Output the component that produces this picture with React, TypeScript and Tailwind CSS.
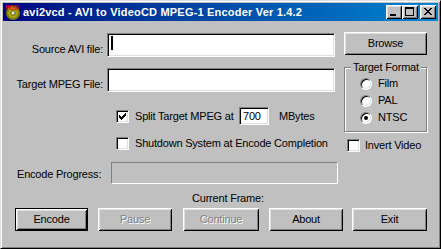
import type { ReactNode } from "react";

// Win98-ish raised button bevel
const raised =
  "shadow-[inset_1px_1px_0_#fff,inset_-1px_-1px_0_#000,inset_2px_2px_0_#dfdfdf,inset_-2px_-2px_0_#808080]";

const sunken =
  "border border-t-[#808080] border-l-[#808080] border-b-white border-r-white shadow-[inset_1px_1px_0_#000,inset_-1px_-1px_0_#dfdfdf]";

function Button({
  children,
  width,
  disabled,
  isDefault,
}: {
  children: ReactNode;
  width: string;
  disabled?: boolean;
  isDefault?: boolean;
}) {
  return (
    <div
      className={`${width} h-[23px] shrink-0 bg-[#c0c0c0] ${
        isDefault ? "border border-black" : ""
      }`}
    >
      <div
        className={`w-full h-full flex items-center justify-center ${raised} ${
          disabled ? "text-[#808080] [text-shadow:1px_1px_0_#fff]" : ""
        }`}
      >
        {children}
      </div>
    </div>
  );
}

function Checkbox({ checked }: { checked?: boolean }) {
  return (
    <div className={`w-[13px] h-[13px] shrink-0 bg-white ${sunken}`}>
      {checked && (
        <svg width="11" height="11" viewBox="0 0 11 11" shapeRendering="crispEdges" className="block">
          <path
            d="M8 2h1v3h-1zM7 3h1v3h-1zM6 4h1v3h-1zM5 5h1v3h-1zM4 6h1v3h-1zM3 5h1v3h-1zM2 4h1v3h-1z"
            fill="#000"
          />
        </svg>
      )}
    </div>
  );
}

function Radio({ label, checked }: { label: string; checked?: boolean }) {
  return (
    <div className="flex items-center h-[17px] pl-[15px]">
      <div className="w-[12px] h-[12px] shrink-0 rounded-full bg-white border border-t-[#808080] border-l-[#808080] border-b-white border-r-white shadow-[inset_1px_1px_0_#000,inset_-1px_-1px_0_#dfdfdf] flex items-center justify-center">
        {checked && <div className="w-[4px] h-[4px] rounded-full bg-black" />}
      </div>
      <span className="ml-[6px]">{label}</span>
    </div>
  );
}

function CaptionButton({ children, className = "" }: { children: ReactNode; className?: string }) {
  return (
    <div className={`w-[16px] h-[14px] bg-[#c0c0c0] ${raised} ${className}`}>
      <svg width="16" height="14" viewBox="0 0 16 14" shapeRendering="crispEdges" className="block">
        {children}
      </svg>
    </div>
  );
}

function TitleBar() {
  return (
    <div className="h-[18px] shrink-0 flex items-center bg-gradient-to-r from-[#000080] to-[#1084d0]">
      {/* app icon: disc with VCD text */}
      <svg width="16" height="16" viewBox="0 0 16 16" className="ml-[2px] shrink-0">
        <circle cx="8" cy="9" r="7" fill="#808000" />
        <circle cx="8" cy="9" r="5" fill="#a8a800" />
        <circle cx="8" cy="9" r="2.2" fill="#e0e0e0" stroke="#404000" strokeWidth="0.8" />
        <text x="0" y="6" fontSize="6.5" fontWeight="bold" fill="#ff0000" fontFamily="Liberation Sans, Arial, sans-serif">
          VCD
        </text>
      </svg>
      <span className="ml-[2px] text-white font-bold text-[11px] leading-[18px] tracking-[0.2px] whitespace-nowrap">
        avi2vcd - AVI to VideoCD MPEG-1 Encoder Ver 1.4.2
      </span>
      <div className="ml-auto mr-[2px] flex items-center">
        <CaptionButton>
          <rect x="4" y="9" width="6" height="2" fill="#000" />
        </CaptionButton>
        <CaptionButton>
          <path d="M3 2h9v2h-9zM3 4h1v6h-1zM11 4h1v6h-1zM3 10h9v1h-9z" fill="#000" />
        </CaptionButton>
        <CaptionButton className="ml-[2px]">
          <path
            d="M4 3h2v1h-2zM10 3h2v1h-2zM5 4h2v1h-2zM9 4h2v1h-2zM6 5h4v1h-4zM7 6h2v1h-2zM6 7h4v1h-4zM5 8h2v1h-2zM9 8h2v1h-2zM4 9h2v1h-2zM10 9h2v1h-2z"
            fill="#000"
          />
        </CaptionButton>
      </div>
    </div>
  );
}

export default function App() {
  return (
    <div className="w-[441px] h-[249px] bg-[#c0c0c0] border border-t-[#dfdfdf] border-l-[#dfdfdf] border-b-black border-r-black p-[2px] shadow-[inset_1px_1px_0_#fff,inset_-1px_-1px_0_#808080] font-['Liberation_Sans',Arial,sans-serif] text-[11px] leading-[13px] text-black flex flex-col overflow-hidden">
      <TitleBar />

      <div className="flex tracking-[-0.2px]">
        {/* Left column */}
        <div className="w-[335px] shrink-0 flex flex-col">
          <div className="mt-[12px] flex items-start h-[24px]">
            <span className="w-[100px] text-right pt-[10px]">Source AVI file:</span>
            <div className={`ml-[4px] w-[228px] h-[24px] bg-white ${sunken} pl-[3px] pt-[2px]`}>
              <div className="w-[2px] h-[14px] bg-black" />
            </div>
          </div>

          <div className="mt-[11px] flex items-start h-[24px]">
            <span className="w-[100px] text-right pt-[10px] whitespace-nowrap">Target MPEG File:</span>
            <div className={`ml-[4px] w-[228px] h-[24px] bg-white ${sunken}`} />
          </div>

          <div className="mt-[15px] flex items-center h-[18px] pl-[113px]">
            <Checkbox checked />
            <span className="ml-[6px] w-[104px] whitespace-nowrap">Split Target MPEG at</span>
            <div className={`w-[30px] h-[18px] bg-white ${sunken} flex items-center pl-[3px]`}>700</div>
            <span className="ml-[10px]">MBytes</span>
          </div>

          <div className="mt-[9px] flex items-center h-[18px] pl-[113px]">
            <Checkbox />
            <span className="ml-[6px] whitespace-nowrap">Shutdown System at Encode Completion</span>
          </div>

          <div className="mt-[10px] flex items-center h-[22px]">
            <span className="w-[108px] pl-[14px] pt-[3px] whitespace-nowrap">Encode Progress:</span>
            <div className="w-[227px] h-[22px] border border-t-[#808080] border-l-[#808080] border-b-white border-r-white" />
          </div>
        </div>

        {/* Right column */}
        <div className="ml-[6px] w-[83px] shrink-0 flex flex-col">
          <div className="mt-[11px]">
            <Button width="w-[83px]">Browse</Button>
          </div>

          <div className="relative mt-[12px] h-[65px] border border-[#808080] shadow-[inset_1px_1px_0_#fff,1px_1px_0_#fff] pt-[7px]">
            <span className="absolute left-[6px] top-[-7px] px-[2px] bg-[#c0c0c0] whitespace-nowrap">
              Target Format
            </span>
            <Radio label="Film" />
            <Radio label="PAL" />
            <Radio label="NTSC" checked />
          </div>

          <div className="mt-[4px] flex items-center h-[18px] pl-[3px]">
            <Checkbox />
            <span className="ml-[5px] whitespace-nowrap">Invert Video</span>
          </div>
        </div>
      </div>

      <div className="mt-[8px] pl-[189px] tracking-[-0.2px]">Current Frame:</div>

      <div className="mt-[3px] flex pl-[12px] tracking-[-0.2px]">
        <Button width="w-[73px]" isDefault>
          Encode
        </Button>
        <div className="ml-[10px]">
          <Button width="w-[74px]" disabled>
            Pause
          </Button>
        </div>
        <div className="ml-[11px]">
          <Button width="w-[76px]" disabled>
            Continue
          </Button>
        </div>
        <div className="ml-[10px]">
          <Button width="w-[74px]">About</Button>
        </div>
        <div className="ml-[9px]">
          <Button width="w-[75px]">Exit</Button>
        </div>
      </div>
    </div>
  );
}
